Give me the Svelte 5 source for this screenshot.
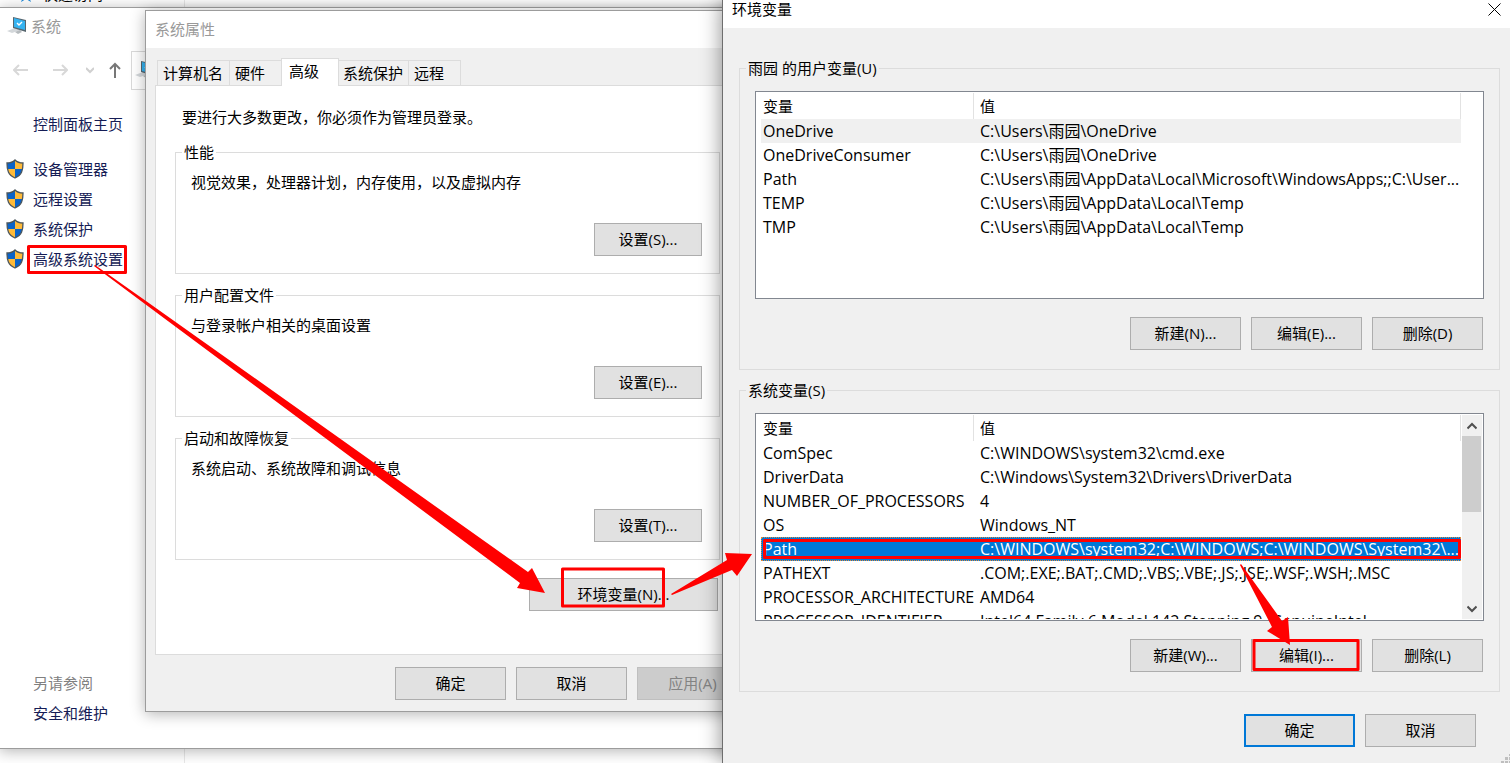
<script>
	const tasks = ['设备管理器', '远程设置', '系统保护', '高级系统设置'];
	const tabs = ['计算机名', '硬件', '高级', '系统保护', '远程'];
	let activeTab = $state('高级');

	const groups = [
		{ title: '性能', text: '视觉效果，处理器计划，内存使用，以及虚拟内存', button: '设置(S)...' },
		{ title: '用户配置文件', text: '与登录帐户相关的桌面设置', button: '设置(E)...' },
		{ title: '启动和故障恢复', text: '系统启动、系统故障和调试信息', button: '设置(T)...' },
	];

	const userVars = [
		['OneDrive', 'C:\\Users\\雨园\\OneDrive'],
		['OneDriveConsumer', 'C:\\Users\\雨园\\OneDrive'],
		['Path', 'C:\\Users\\雨园\\AppData\\Local\\Microsoft\\WindowsApps;;C:\\User...'],
		['TEMP', 'C:\\Users\\雨园\\AppData\\Local\\Temp'],
		['TMP', 'C:\\Users\\雨园\\AppData\\Local\\Temp'],
	];

	const systemVars = [
		['ComSpec', 'C:\\WINDOWS\\system32\\cmd.exe'],
		['DriverData', 'C:\\Windows\\System32\\Drivers\\DriverData'],
		['NUMBER_OF_PROCESSORS', '4'],
		['OS', 'Windows_NT'],
		['Path', 'C:\\WINDOWS\\system32;C:\\WINDOWS;C:\\WINDOWS\\System32\\...'],
		['PATHEXT', '.COM;.EXE;.BAT;.CMD;.VBS;.VBE;.JS;.JSE;.WSF;.WSH;.MSC'],
		['PROCESSOR_ARCHITECTURE', 'AMD64'],
		['PROCESSOR_IDENTIFIER', 'Intel64 Family 6 Model 142 Stepping 9, GenuineIntel'],
	];

	const lists = [
		{ title: '雨园 的用户变量(U)', rows: userVars, hover: 0, selected: -1, scroll: false, buttons: ['新建(N)...', '编辑(E)...', '删除(D)'] },
		{ title: '系统变量(S)', rows: systemVars, hover: -1, selected: 4, scroll: true, buttons: ['新建(W)...', '编辑(I)...', '删除(L)'] },
	];
</script>

{#snippet computer()}
	<svg class="computer" viewBox="0 0 20 18" aria-hidden="true">
		<path d="M0 14 L8 11 L14 13 L5 16 Z" fill="#d3d7da" />
		<path d="M8 15 L13 13 L15 15 L11 17 Z" fill="#b5babd" />
		<path d="M6 0 L19 3 V15 L6 11 Z" fill="#56656e" />
		<path d="M7 1 L18 4 V13 L7 10 Z" fill="#35b3f1" />
		<path d="M10 6 L12 8 L15 5" fill="none" stroke="#fff" stroke-width="1.4" />
	</svg>
{/snippet}

<div class="desktop">
	<div class="explorer">
		<svg viewBox="0 0 12 12" aria-hidden="true"><path d="M6 0 L8 4 L12 4 L9 7 L11 12 L6 9 L1 12 L3 7 L0 4 L4 4 Z" fill="#1e88d8" /></svg>
		<span>快速访问</span>
	</div>

	<section class="window system">
		<header>{@render computer()}<span>系统</span></header>
		<nav>
			<button aria-label="后退"><svg width="16" height="16" viewBox="0 0 16 16"><path d="M15 8 H1 M6 3 L1 8 L6 13" stroke="#d8d8d8" /></svg></button>
			<button aria-label="前进"><svg width="16" height="16" viewBox="0 0 16 16"><path d="M1 8 H15 M10 3 L15 8 L10 13" stroke="#d8d8d8" /></svg></button>
			<button aria-label="最近"><svg width="8" height="16" viewBox="0 0 8 16"><path d="M0 6 L4 10 L8 6" stroke="#d0d0d0" /></svg></button>
			<button aria-label="向上"><svg width="12" height="16" viewBox="0 0 12 16"><path d="M6 16 V2 M1 7 L6 2 L11 7" stroke="#777" /></svg></button>
			<div class="address">{@render computer()}</div>
		</nav>
		<aside>
			<a class="home" href="#home">控制面板主页</a>
			{#each tasks as task}
				<a class="task" href="#task">
					<svg width="20" height="20" viewBox="0 0 20 20" aria-hidden="true">
						<clipPath id="shield"><path d="M10 1 C12 3 15 4 18 4 C18 11 17 16 10 19 C3 16 2 11 2 4 C5 4 8 3 10 1 Z" /></clipPath>
						<g clip-path="url(#shield)">
							<path d="M0 0 H10 V10 H0 Z M10 10 H20 V20 H10 Z" fill="#0a63c9" />
							<path d="M10 0 H20 V10 H10 Z M0 10 H10 V20 H0 Z" fill="#ffba38" />
						</g>
						<path d="M10 1 C12 3 15 4 18 4 C18 11 17 16 10 19 C3 16 2 11 2 4 C5 4 8 3 10 1 Z" fill="none" stroke="#4c565c" stroke-width="1.3" />
					</svg>
					{task}
				</a>
			{/each}
			<span class="see-also">另请参阅</span>
			<a class="security" href="#security">安全和维护</a>
		</aside>
	</section>

	<section class="window properties">
		<header>系统属性</header>
		<div class="body">
			<div class="tabs" role="tablist">
				{#each tabs as tab}
					<button role="tab" aria-selected={tab === activeTab} class:active={tab === activeTab} onclick={() => (activeTab = tab)}>{tab}</button>
				{/each}
			</div>
			<div class="panel">
				<p class="notice">要进行大多数更改，你必须作为管理员登录。</p>
				{#each groups as group}
					<fieldset>
						<legend>{group.title}</legend>
						<p>{group.text}</p>
						<button class="btn">{group.button}</button>
					</fieldset>
				{/each}
				<button class="btn env">环境变量(N)...</button>
			</div>
			<footer>
				<button class="btn">确定</button>
				<button class="btn">取消</button>
				<button class="btn" disabled>应用(A)</button>
			</footer>
		</div>
	</section>

	<section class="window variables">
		<header>
			环境变量
			<button aria-label="关闭"><svg width="13" height="13" viewBox="0 0 13 13"><path d="M0.5 0.5 L12.5 12.5 M12.5 0.5 L0.5 12.5" stroke="#000" /></svg></button>
		</header>
		<div class="body">
			{#each lists as list}
				<fieldset>
					<legend>{list.title}</legend>
					<div class="listbox">
						<div class="rows">
							<table>
								<thead>
									<tr><th>变量</th><th>值</th></tr>
								</thead>
								<tbody>
									{#each list.rows as row, i}
										<tr class:hover={i === list.hover} class:selected={i === list.selected}>
											<td>{row[0]}</td>
											<td>{row[1]}</td>
										</tr>
									{/each}
								</tbody>
							</table>
						</div>
						<div class="scrollbar" class:visible={list.scroll}>
							{#if list.scroll}
								<button aria-label="向上滚动"><svg width="10" height="8" viewBox="0 0 10 8"><path d="M0.5 6.5 L5 2 L9.5 6.5" /></svg></button>
								<div class="thumb"></div>
								<button aria-label="向下滚动"><svg width="10" height="8" viewBox="0 0 10 8"><path d="M0.5 1.5 L5 6 L9.5 1.5" /></svg></button>
							{/if}
						</div>
					</div>
					<div class="actions">
						{#each list.buttons as label}
							<button class="btn">{label}</button>
						{/each}
					</div>
				</fieldset>
			{/each}
			<footer>
				<button class="btn default">确定</button>
				<button class="btn">取消</button>
			</footer>
		</div>
		<svg class="grip" width="9" height="9" viewBox="0 0 9 9" aria-hidden="true">
			<path d="M8 0h1v2h-1z M4 3h3v3h-3z M8 3h1v3h-1z M0 7h3v2h-3z M4 7h3v2h-3z M8 7h1v2h-1z" fill="#bfbfbf" />
		</svg>
	</section>

	<!-- red marks that lead from one step to the next -->
	<svg class="marks" width="1510" height="763" viewBox="0 0 1510 763" aria-hidden="true">
		<g fill="none" stroke="#ff0000" stroke-width="3" stroke-linejoin="round">
			<rect x="28.5" y="246.5" width="97" height="26" />
			<rect x="562.5" y="569" width="101" height="37" />
			<rect x="764.5" y="540.5" width="695" height="17" />
			<rect x="1254" y="640.5" width="104" height="29" />
		</g>
		<g fill="#ff0000">
			<path d="M95 265 L146 301 L528 572 L532 568 L545 593 L517 588 L520 583 L145 304 L94 266 Z" />
			<path d="M671 594 L727 560 L725 553 L752 554 L737 576 L732 570 L672 595 Z" />
			<path d="M1241 564 L1282 621 L1288 617 L1290 645 L1267 631 L1272 627 L1240 565 Z" />
		</g>
	</svg>
</div>

<style>
	:global(body) {
		background: #fff;
	}

	.desktop {
		position: relative;
		min-height: 100vh;
		overflow: hidden;
		color: #000;
		font: 15px/21px "Open Sans", "Noto Sans CJK SC", sans-serif;
	}

	button {
		font: inherit;
		color: inherit;
		padding: 0;
		border: 0;
		background: none;
	}

	p {
		margin: 0;
	}

	.btn {
		width: 111px;
		height: 33px;
		border: 1px solid #adadad;
		background: #e1e1e1;
		white-space: nowrap;
	}

	.btn:disabled {
		border-color: #bfbfbf;
		background: #ccc;
		color: #838383;
	}

	.btn.default {
		border: 2px solid #0078d7;
	}

	fieldset {
		min-width: 0;
		margin: 0;
		border: 1px solid #dcdcdc;
	}

	legend {
		height: 21px;
		padding: 0 2px;
	}

	.explorer {
		position: absolute;
		top: -16px;
		left: 0;
		width: 184px;
		height: 100%;
		padding-bottom: 16px;
		border-right: 1px solid #e8e8e8;
		display: flex;
		gap: 11px;
	}

	.explorer svg {
		width: 12px;
		height: 24px;
		margin-left: 20px;
	}

	.window {
		position: absolute;
		box-sizing: border-box;
		border: 1px solid #9c9c9c;
		background: #fff;
		box-shadow: 0 2px 14px rgba(0, 0, 0, 0.3);
	}

	.computer {
		width: 20px;
		height: 18px;
		flex: none;
	}

	/* 系统 */
	.system {
		top: 7px;
		left: -1px;
		width: 800px;
		height: 742px;
	}

	.system header {
		display: flex;
		align-items: center;
		gap: 4px;
		box-sizing: border-box;
		height: 38px;
		padding: 0 0 2px 7px;
		color: #999;
	}

	.system nav {
		display: flex;
		align-items: center;
		height: 48px;
	}

	.system nav button {
		display: flex;
		margin-left: 13px;
	}

	.system nav button + button {
		margin-left: 23px;
	}

	.system nav button:nth-child(3) {
		margin-left: 18px;
	}

	.system nav button:nth-child(4) {
		margin-left: 15px;
	}

	.system nav button path {
		fill: none;
		stroke-width: 2;
	}

	.address {
		display: flex;
		align-items: center;
		flex: 1;
		height: 37px;
		margin-left: 10px;
		padding-left: 3px;
		border: 1px solid #d9d9d9;
	}

	aside {
		display: flex;
		flex-direction: column;
		height: 655px;
		line-height: 30px;
	}

	aside a {
		color: #151c55;
		text-decoration: none;
	}

	.home,
	.see-also,
	.security {
		margin-left: 33px;
	}

	.home {
		margin: 15px 0 15px 33px;
	}

	.task {
		display: flex;
		align-items: center;
		gap: 8px;
		margin-left: 5px;
	}

	.see-also {
		margin-top: auto;
		color: #808080;
	}

	.security {
		margin-bottom: 21px;
	}

	/* 系统属性 */
	.properties {
		top: 10px;
		left: 145px;
		width: 615px;
	}

	.properties header {
		padding: 8px 9px;
		color: #999;
	}

	.properties .body {
		padding: 10px 10px 11px 9px;
		background: #f0f0f0;
	}

	.tabs {
		display: flex;
		align-items: flex-end;
		height: 28px;
		margin: 0 2px -1px;
	}

	.tabs button {
		height: 26px;
		padding: 0 6px 0 5px;
		border: 1px solid #dcdcdc;
		border-right: 0;
		text-align: left;
	}

	.tabs button:nth-child(2) {
		width: 52px;
	}

	.tabs button:last-child {
		width: 53px;
		border-right: 1px solid #dcdcdc;
	}

	.tabs .active {
		z-index: 1;
		width: 58px;
		height: 28px;
		padding: 0 7px 3px;
		border-right: 1px solid #dcdcdc;
		border-bottom: 0;
		background: #fff;
	}

	.tabs .active + button {
		padding: 0 5px 0 4px;
		border-left: 0;
	}

	.panel {
		display: flex;
		flex-direction: column;
		gap: 11px;
		padding: 21px 28px 43px 19px;
		border: 1px solid #dcdcdc;
		background: #fff;
	}

	.notice {
		margin: 0 0 3px 7px;
	}

	.panel fieldset {
		padding: 9px 17px 17px 15px;
		display: flex;
		flex-direction: column;
	}

	.panel legend {
		margin-left: -9px;
	}

	.panel fieldset .btn {
		align-self: flex-end;
		width: 108px;
		margin-top: 30px;
	}

	.btn.env {
		align-self: flex-end;
		width: 189px;
		margin: 7px 2px 0 0;
	}

	footer,
	.actions {
		display: flex;
		justify-content: flex-end;
		gap: 10px;
	}

	.properties footer {
		margin-top: 12px;
		padding-right: 1px;
	}

	/* 环境变量 */
	.variables {
		top: 0;
		right: 0;
		bottom: 0;
		left: 722px;
		border-width: 0 0 0 1px;
		border-color: #6e6e6e;
		background: #f0f0f0;
		box-shadow: 0 0 20px rgba(0, 0, 0, 0.45);
	}

	.variables header {
		display: flex;
		justify-content: space-between;
		align-items: flex-start;
		height: 28px;
		padding: 0 9px;
		box-sizing: border-box;
		background: #fff;
		line-height: 19px;
	}

	.variables header button {
		display: flex;
		padding-top: 3px;
	}

	.variables .body {
		padding: 30px 10px 0 16px;
	}

	.variables fieldset {
		margin-bottom: 10px;
		padding: 12px 15px 19px;
	}

	.variables legend {
		margin-left: -9px;
	}

	.listbox {
		display: flex;
		box-sizing: border-box;
		height: 208px;
		padding: 1px 1px 1px 5px;
		border: 1px solid #828790;
		background: #fff;
	}

	.rows {
		flex: 1;
		min-width: 0;
		overflow: hidden;
	}

	table {
		width: 100%;
		table-layout: fixed;
		border-collapse: separate;
		border-spacing: 0;
	}

	th {
		height: 26px;
		padding: 0 2px;
		box-sizing: border-box;
		border-right: 1px solid #e2e2e2;
		font-weight: 400;
		text-align: left;
	}

	th:first-child {
		width: 213px;
	}

	td {
		height: 24px;
		padding: 0 2px;
		font-size: 16px;
		line-height: 24px;
		white-space: nowrap;
	}

	th + th,
	td + td {
		padding: 0 0 0 6px;
	}

	.hover {
		background: #f0f0f0;
	}

	.selected {
		background: #0078d7;
		color: #fff;
		outline: 1px dotted #e08a3c;
		outline-offset: -1px;
	}

	.scrollbar {
		display: flex;
		flex-direction: column;
		width: 20px;
		margin-left: 1px;
	}

	.scrollbar.visible {
		background: #f0f0f0;
	}

	.scrollbar button {
		display: flex;
		align-items: center;
		justify-content: center;
		height: 21px;
	}

	.scrollbar path {
		fill: none;
		stroke: #505050;
		stroke-width: 2;
	}

	.thumb {
		height: 76px;
		margin: 0 1px auto 0;
		background: #cdcdcd;
	}

	.actions {
		margin-top: 18px;
		padding-right: 1px;
	}

	.variables footer {
		margin-top: 22px;
		padding-right: 24px;
	}

	.grip {
		position: absolute;
		right: 0;
		bottom: 0;
	}

	.marks {
		position: absolute;
		top: 0;
		left: 0;
		pointer-events: none;
	}
</style>
